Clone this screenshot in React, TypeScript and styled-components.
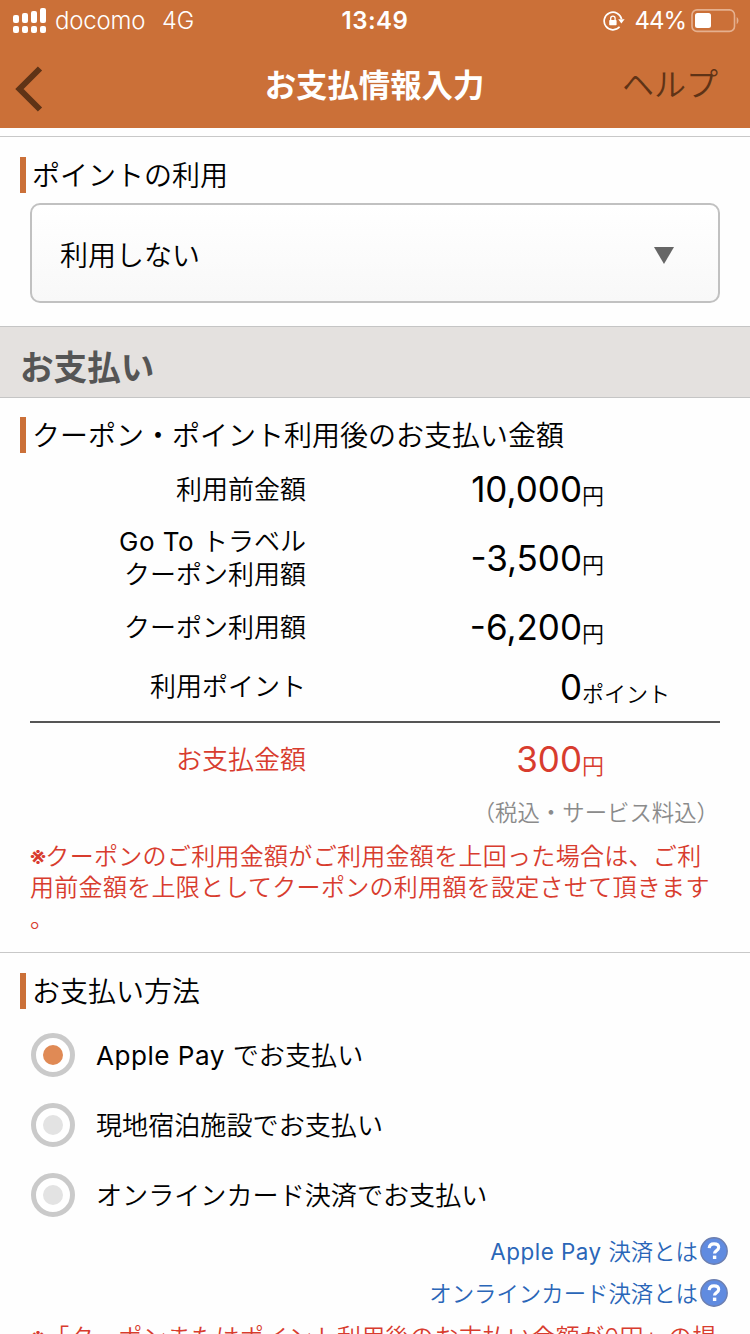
import React from "react";
import styled, { createGlobalStyle } from "styled-components";

const GlobalStyle = createGlobalStyle`
  * { box-sizing: border-box; }
  html, body { margin: 0; padding: 0; }
  body {
    background: #fefefe;
    color: #000;
    font-family: Inter, "Noto Sans CJK JP", sans-serif;
    font-weight: 350;
  }
`;

const Screen = styled.div`
  width: 750px;
  height: 1334px;
  overflow: hidden;
  background: #fefefe;
`;

const Header = styled.header`
  height: 128px;
  background: #cb7038;
  color: #fff;
`;

const StatusBar = styled.div`
  display: grid;
  grid-template-columns: 1fr auto 1fr;
  align-items: center;
  height: 40px;
  padding: 0 11px 0 13px;
  line-height: 40px;
`;

const Carrier = styled.div`
  display: flex;
  align-items: center;
  font-size: 24px;
  font-weight: 300;
`;

const CarrierName = styled.span`
  width: 107px;
  margin-left: 8px;
  padding-top: 1px;
  letter-spacing: -0.2px;
`;

const Network = styled.span`
  font-size: 23.5px;
  padding-top: 1px;
`;

const Clock = styled.div`
  padding: 1px 2px 0 0;
  font-size: 24px;
  font-weight: 600;
  letter-spacing: 0.5px;
`;

const StatusRight = styled.div`
  display: flex;
  align-items: center;
  justify-content: flex-end;
  font-size: 24px;
  font-weight: 400;
`;

const Percent = styled.span`
  margin: 0 5px 0 9px;
  padding-top: 1px;
  letter-spacing: -1px;
`;

const NavBar = styled.div`
  display: grid;
  grid-template-columns: 1fr auto 1fr;
  align-items: center;
  height: 88px;
  padding: 0 32px 0 15px;
`;

const BackButton = styled.button`
  display: flex;
  width: 30px;
  margin: 9px 0 0;
  padding: 0;
  border: 0;
  background: none;
`;

const Title = styled.h1`
  margin: 0;
  padding: 3px 0 0 16px;
  font-size: 31.4px;
  font-weight: 700;
  line-height: 84px;
`;

const Help = styled.span`
  justify-self: end;
  padding-top: 2px;
  color: #5f3316;
  font-size: 32px;
  line-height: 86px;
`;

const PointSection = styled.section`
  height: 190px;
  margin-top: 8px;
  border-top: 1px solid #c8c8c8;
  padding: 20px 30px 0 20px;
`;

const Heading = styled.h2`
  margin: 0;
  height: 36px;
  padding-left: 6px;
  border-left: 6px solid #cb7038;
  font-size: 28px;
  font-weight: 350;
  line-height: 39px;
  white-space: nowrap;
`;

const Select = styled.div`
  display: flex;
  align-items: center;
  justify-content: space-between;
  height: 100px;
  margin: 10px 0 0 10px;
  padding: 2px 43px 0 28px;
  border: 2px solid #c1c1c1;
  border-radius: 10px;
  background: linear-gradient(#fff, #f8f8f8);
  font-size: 28px;
`;

const Caret = styled.svg`
  margin-top: 3px;
`;

const Band = styled.div`
  height: 72px;
  padding: 6px 20px 0;
  border: solid #c5c5c5;
  border-width: 1px 0;
  background: #e4e1df;
  color: #555;
  font-size: 33.6px;
  font-weight: 700;
  line-height: 70px;
`;

const PaymentSection = styled.section`
  height: 555px;
  border-bottom: 1px solid #c8c8c8;
  padding: 19px 0 0 20px;
`;

const Amounts = styled.div`
  margin: 0 30px 0 10px;
  padding-bottom: 11px;
  border-bottom: 2px solid #555;
`;

const AmountRow = styled.div<{ $height: number; $red?: boolean }>`
  display: grid;
  grid-template-columns: 276px 276px 1fr;
  align-items: center;
  height: ${(p) => p.$height}px;
  color: ${(p) => (p.$red ? "#d83c2e" : "#000")};
`;

const Label = styled.div`
  text-align: right;
  font-size: 26px;
  line-height: 33px;
`;

const Latin = styled.span`
  font-weight: 400;
  letter-spacing: 0.5px;
`;

const Value = styled.div`
  text-align: right;
  font-size: 35px;
  font-weight: 400;
  line-height: 44px;
`;

const Unit = styled.div`
  font-size: 22px;
  line-height: 32px;
  padding-top: 14px;
`;

const TotalRow = styled.div`
  margin: 0 30px 0 10px;
`;

const TaxNote = styled.p`
  margin: 0;
  padding: 2px 31px 0 0;
  color: #8b8b8b;
  text-align: right;
  font-size: 22.4px;
  line-height: 32px;
`;

const Notice = styled.p`
  margin: 12px 0 0 10px;
  color: #d83c2e;
  font-size: 24px;
  line-height: 31px;
  letter-spacing: 0.3px;
  white-space: nowrap;
`;

const Mark = styled.span`
  margin: 0 -2px 0 -1px;
  font-weight: 600;
`;

const MethodSection = styled.section`
  padding: 20px 20px 0;
`;

const Options = styled.div`
  display: flex;
  flex-direction: column;
  gap: 26px;
  margin: 24px 0 0 11px;
`;

const Option = styled.label`
  display: flex;
  align-items: center;
  gap: 21px;
  height: 44px;
  font-size: 26.1px;
  line-height: 40px;
`;

const OptionText = styled.span`
  padding-top: 1px;
`;

const Radio = styled.span<{ $checked?: boolean }>`
  display: grid;
  place-items: center;
  width: 44px;
  height: 44px;
  border: 5px solid #cacaca;
  border-radius: 50%;
  background: #fff;
  &::before {
    content: "";
    width: 20px;
    height: 20px;
    border-radius: 50%;
    background: ${(p) => (p.$checked ? "#e08a55" : "#e3e3e3")};
  }
`;

const Links = styled.div`
  display: flex;
  flex-direction: column;
  align-items: flex-end;
  margin: 13px 2px 0 0;
`;

const HelpLink = styled.a`
  display: flex;
  align-items: center;
  gap: 2px;
  height: 42px;
  color: #2a66b8;
  font-size: 22.4px;
  line-height: 38px;
`;

const LinkText = styled.span`
  padding-top: 1px;
`;

const Footnote = styled(Notice)`
  margin-top: 8px;
`;

function SignalIcon() {
  const tops = [14, 12, 10, 7];
  return (
    <svg width="34" height="40" viewBox="0 0 34 40" fill="#fff">
      {tops.map((top, i) => (
        <g key={top}>
          <rect x={i * 9} y={top} width="6" height={22 - top} rx="2" />
          <rect x={i * 9} y="25" width="6" height="7" rx="2" />
        </g>
      ))}
    </svg>
  );
}

function RotationLockIcon() {
  return (
    <svg width="22" height="22" viewBox="0 0 22 22" fill="none" stroke="#fff">
      <path d="M18.6 9.2A8.8 8.8 0 1 0 16.6 16.8" strokeWidth="1.7" />
      <path d="M15.2 9.2h6.4L18.4 13.4z" fill="#fff" stroke="none" />
      <rect x="6.2" y="10" width="7.4" height="5.2" rx="0.8" fill="#fff" stroke="none" />
      <path d="M7.7 10.3V8.3a2.2 2.2 0 0 1 4.4 0v2" strokeWidth="1.3" />
    </svg>
  );
}

function BatteryIcon() {
  return (
    <svg width="48" height="24" viewBox="0 0 48 24">
      <rect x="1" y="0.9" width="42.5" height="21.5" rx="5" fill="none" stroke="#e5b08f" strokeWidth="1.6" />
      <rect x="4" y="4" width="16" height="15" rx="2.5" fill="#fff" />
      <path d="M45.7 8c2.3 1.6 2.3 5.6 0 7.2z" fill="#e5b08f" />
    </svg>
  );
}

function BackIcon() {
  return (
    <svg width="30" height="46" viewBox="0 0 30 46">
      <path d="M25 2.5L4.5 23L25 43.5" fill="none" stroke="#5f3316" strokeWidth="6" />
    </svg>
  );
}

function QuestionIcon() {
  return (
    <svg width="28" height="28" viewBox="0 0 28 28">
      <circle cx="14" cy="14" r="13.2" fill="#608be0" stroke="#6c7fb0" strokeWidth="1.4" />
      <path d="M9.2 11.1c.2-3 2.1-4.2 4.8-4.2 2.9 0 4.7 1.3 4.7 3.6 0 3.2-4.2 3-4.2 6" fill="none" stroke="#fff" strokeWidth="3.1" />
      <rect x="12.9" y="18.6" width="3.4" height="3.4" fill="#fff" />
    </svg>
  );
}

const rows: { label: React.ReactNode; value: string; unit: string; height: number }[] = [
  { label: "利用前金額", value: "10,000", unit: "円", height: 72 },
  {
    label: (
      <>
        <Latin>Go To </Latin>トラベル
        <br />
        クーポン利用額
      </>
    ),
    value: "-3,500",
    unit: "円",
    height: 66,
  },
  { label: "クーポン利用額", value: "-6,200", unit: "円", height: 72 },
  { label: "利用ポイント", value: "0", unit: "ポイント", height: 47 },
];

const methods = [
  { latin: "Apple Pay ", text: "でお支払い" },
  { latin: "", text: "現地宿泊施設でお支払い" },
  { latin: "", text: "オンラインカード決済でお支払い" },
];

const links = [
  { latin: "Apple Pay ", text: "決済とは" },
  { latin: "", text: "オンラインカード決済とは" },
];

export default function App() {
  return (
    <Screen>
      <GlobalStyle />
      <Header>
        <StatusBar>
          <Carrier>
            <SignalIcon />
            <CarrierName>docomo</CarrierName>
            <Network>4G</Network>
          </Carrier>
          <Clock>13:49</Clock>
          <StatusRight>
            <RotationLockIcon />
            <Percent>44%</Percent>
            <BatteryIcon />
          </StatusRight>
        </StatusBar>
        <NavBar>
          <BackButton>
            <BackIcon />
          </BackButton>
          <Title>お支払情報入力</Title>
          <Help>ヘルプ</Help>
        </NavBar>
      </Header>

      <PointSection>
        <Heading>ポイントの利用</Heading>
        <Select>
          <span>利用しない</span>
          <Caret width="22" height="18" viewBox="0 0 22 18">
            <path d="M1 0h20L11 17z" fill="#666" />
          </Caret>
        </Select>
      </PointSection>

      <Band>お支払い</Band>

      <PaymentSection>
        <Heading>クーポン・ポイント利用後のお支払い金額</Heading>
        <Amounts>
          {rows.map((row) => (
            <AmountRow key={row.value} $height={row.height}>
              <Label>{row.label}</Label>
              <Value>{row.value}</Value>
              <Unit>{row.unit}</Unit>
            </AmountRow>
          ))}
        </Amounts>
        <TotalRow>
          <AmountRow $height={72} $red>
            <Label>お支払金額</Label>
            <Value>300</Value>
            <Unit>円</Unit>
          </AmountRow>
        </TotalRow>
        <TaxNote>（税込・サービス料込）</TaxNote>
        <Notice>
          <Mark>※</Mark>クーポンのご利用金額がご利用金額を上回った場合は、ご利
          <br />
          用前金額を上限としてクーポンの利用額を設定させて頂きます
          <br />。
        </Notice>
      </PaymentSection>

      <MethodSection>
        <Heading>お支払い方法</Heading>
        <Options>
          {methods.map((method, i) => (
            <Option key={method.text}>
              <Radio $checked={i === 0} />
              <OptionText>
                <Latin>{method.latin}</Latin>
                {method.text}
              </OptionText>
            </Option>
          ))}
        </Options>
        <Links>
          {links.map((link) => (
            <HelpLink key={link.text}>
              <LinkText>
                <Latin>{link.latin}</Latin>
                {link.text}
              </LinkText>
              <QuestionIcon />
            </HelpLink>
          ))}
        </Links>
        <Footnote>
          <Mark>※</Mark>「クーポンまたはポイント利用後のお支払い金額が0円」の場
        </Footnote>
      </MethodSection>
    </Screen>
  );
}
